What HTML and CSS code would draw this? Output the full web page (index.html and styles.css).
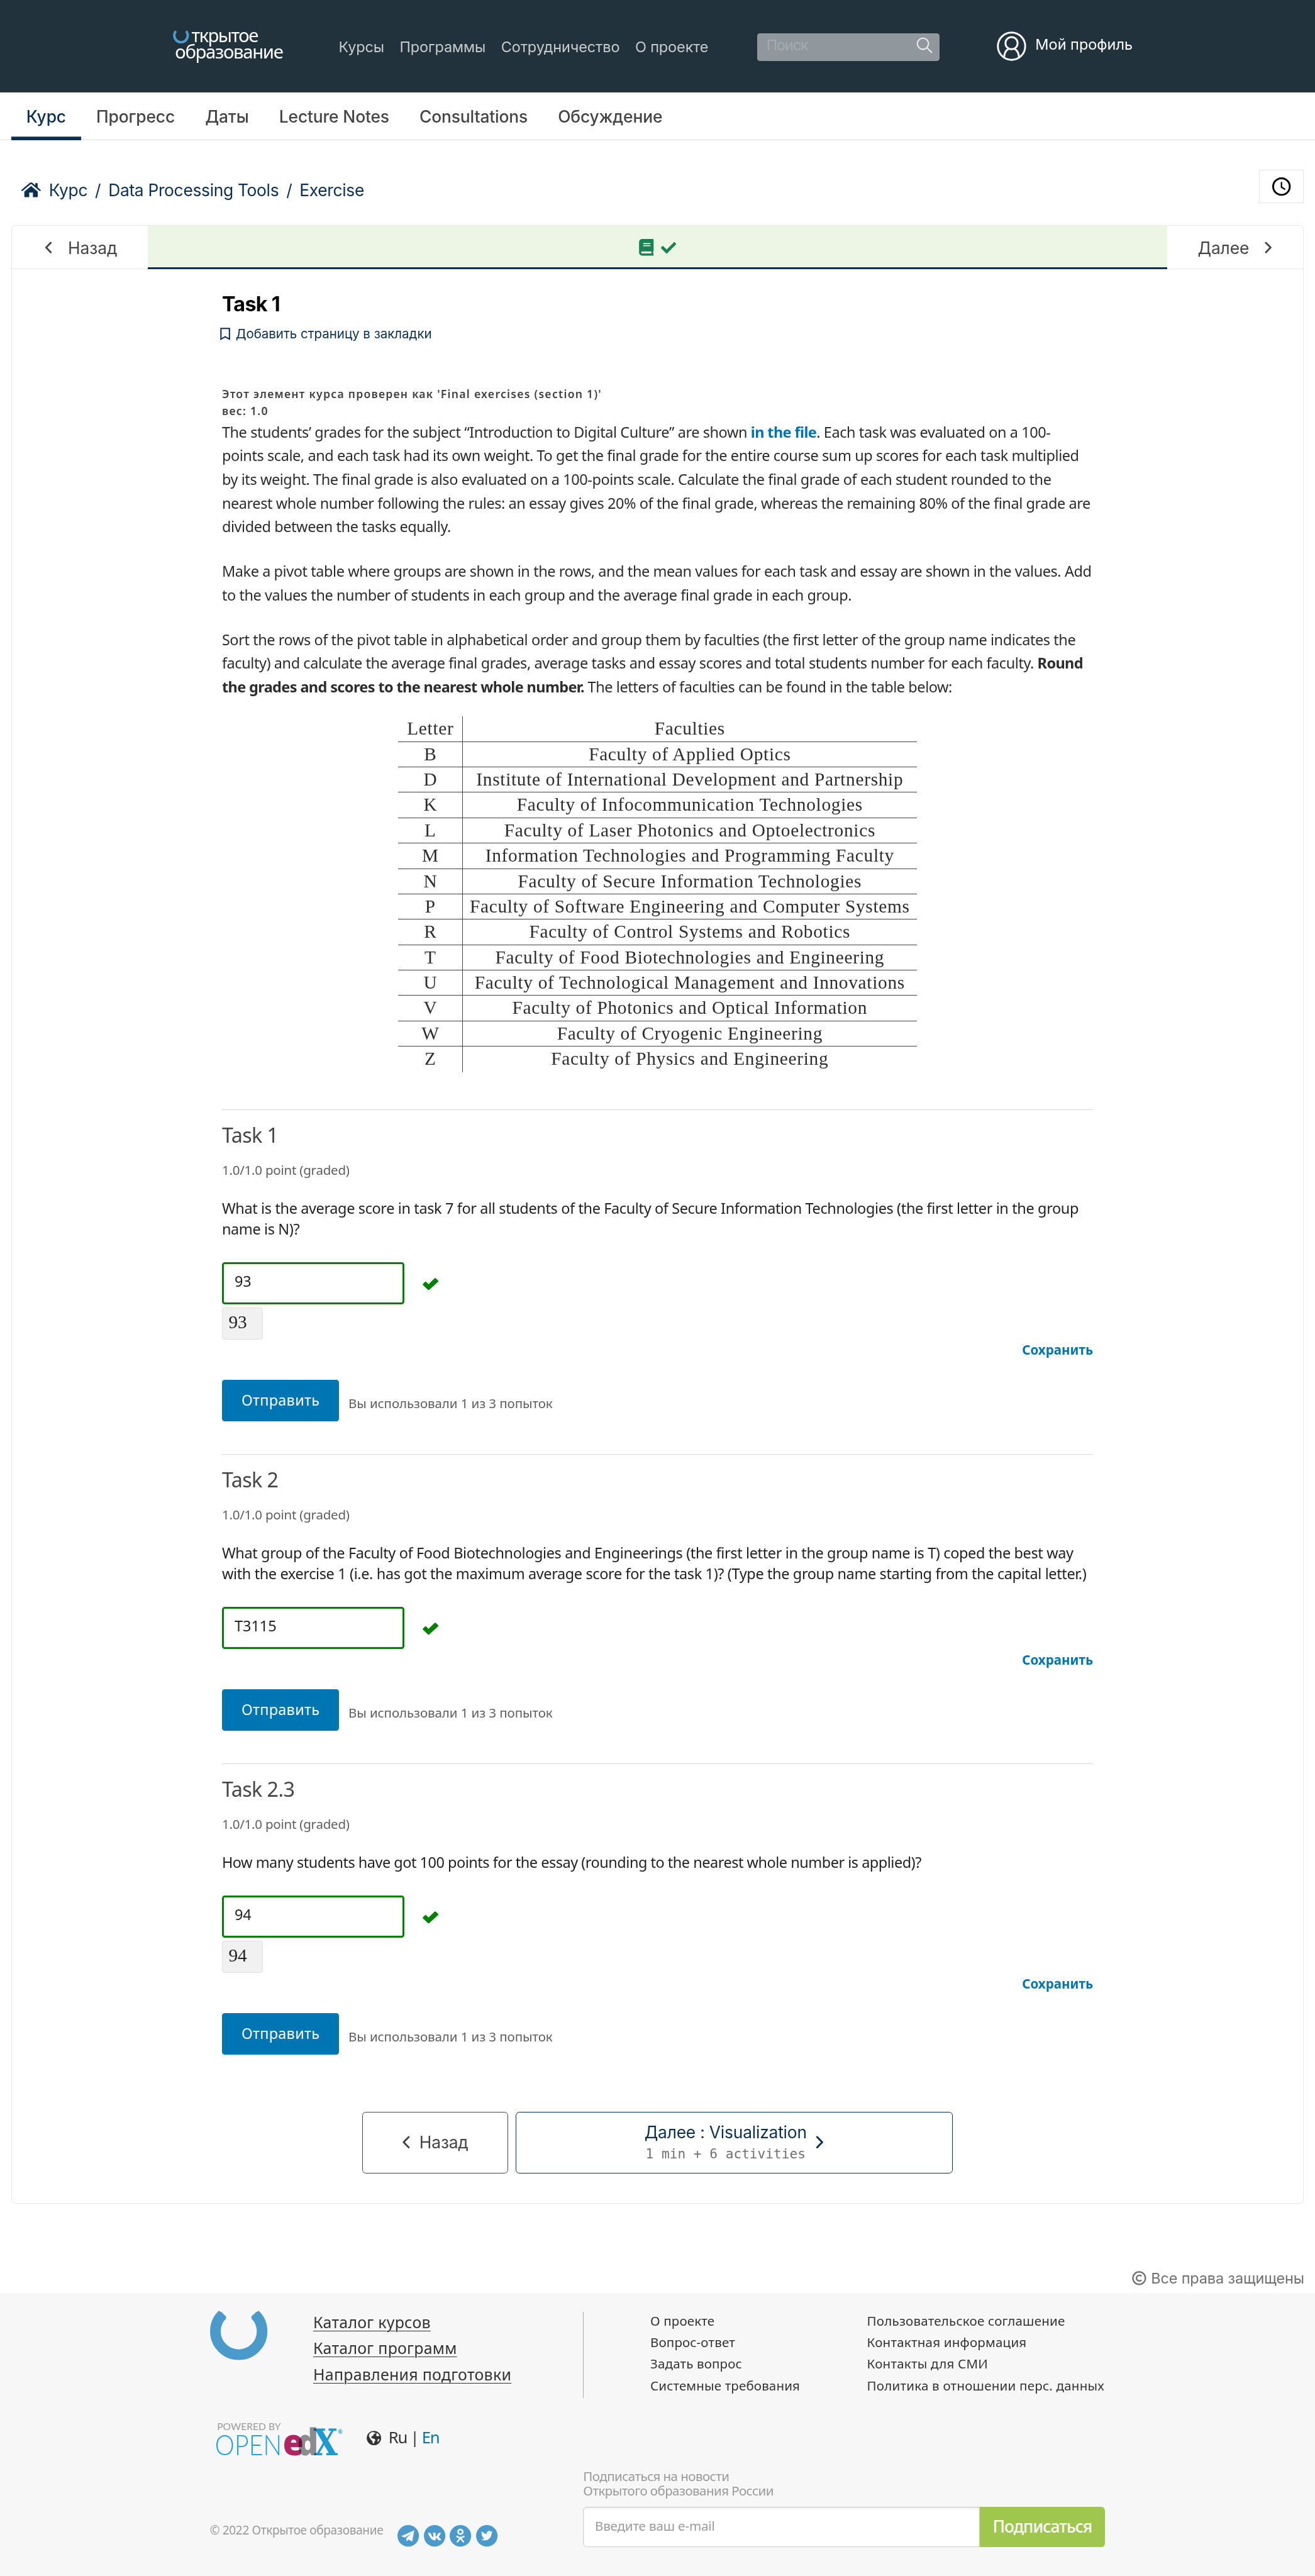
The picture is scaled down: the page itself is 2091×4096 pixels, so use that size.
FILE: index.html
```
<!DOCTYPE html>
<html lang="ru">
<head>
<meta charset="utf-8">
<title>Task 1 | Открытое образование</title>
<link rel="stylesheet" href="styles.css">
</head>
<body>
<svg class="defs" aria-hidden="true">
  <symbol id="check" viewBox="0 0 512 512"><path d="M173.898 439.404l-166.4-166.4c-9.997-9.997-9.997-26.206 0-36.204l36.203-36.204c9.997-9.998 26.207-9.998 36.204 0L192 312.69 432.095 72.596c9.997-9.997 26.207-9.997 36.204 0l36.203 36.204c9.997 9.997 9.997 26.206 0 36.204l-294.4 294.401c-9.998 9.997-26.207 9.997-36.204-.001z"/></symbol>
  <symbol id="heavy-check" viewBox="0 0 17 13.2"><path d="M.3 6.6L2.6 4.2q.6-.6 1.2 0L6.3 6.8 12.9.4q.6-.6 1.2 0l2.6 2.4q.5.6 0 1.2L7 12.8q-.6.6-1.2 0L.3 7.6q-.5-.5 0-1z"/></symbol>
  <symbol id="left" viewBox="0 0 8 13"><path d="M6.7 1.3L1.6 6.5l5.1 5.2" fill="none" stroke="currentColor" stroke-width="1.9" stroke-linecap="round" stroke-linejoin="round"/></symbol>
  <symbol id="right" viewBox="0 0 8 13"><path d="M1.3 1.3l5.1 5.2-5.1 5.2" fill="none" stroke="currentColor" stroke-width="1.9" stroke-linecap="round" stroke-linejoin="round"/></symbol>
</svg>

<header class="top">
  <a class="brand">
    <span class="brand-line"><svg class="brand-o" viewBox="0 0 17.5 14.7"><path d="M3.2 1A7.3 7.3 0 1 0 14.3 1" fill="none" stroke="#4a9bd0" stroke-width="2.7"/></svg>ткрытое</span>
    <span class="brand-line second">образование</span>
  </a>
  <nav class="menu"><a>Курсы</a><a>Программы</a><a>Сотрудничество</a><a>О проекте</a></nav>
  <div class="search"><span>Поиск</span><svg viewBox="0 0 18 18"><circle cx="7.2" cy="7.2" r="6" /><path d="M11.6 11.6l5.4 5.4"/></svg></div>
  <a class="profile"><svg viewBox="0 0 32 32"><circle cx="16" cy="16" r="14.8"/><circle cx="16" cy="12.7" r="6.6"/><path d="M7.9 28c.4-5.4 2.6-8 5-9.2M24.100 28c-.4-5.400-2.600-8-5-9.200"/></svg>Мой профиль</a>
</header>

<nav class="tabs"><a class="active">Курс</a><a>Прогресс</a><a>Даты</a><a>Lecture Notes</a><a>Consultations</a><a>Обсуждение</a></nav>

<div class="path">
  <div class="crumbs">
    <svg viewBox="0 0 21 16"><path d="M10.500 4L17.800 10v5.200q0 .8-.8.8h-4.500v-5H8.500v5H4q-.8 0-.8-.8V10z"/><path d="M.8 8.600L9.600 1.200q.9-.7 1.800 0L20.200 8.600" fill="none" stroke="currentColor" stroke-width="1.6" stroke-linecap="round"/><path d="M15 .9h2.600v5l-2.600-2.200z"/></svg>
    <a>Курс</a><i>/</i><a>Data Processing Tools</a><i>/</i><a>Exercise</a>
  </div>
  <button class="clock"><svg viewBox="0 0 20 20"><circle cx="10" cy="10" r="9" /><path d="M10 5v5.600l4 2.500"/></svg></button>
</div>

<main class="card">
  <div class="seq">
    <a class="seq-side"><svg><use href="#left"/></svg>Назад</a>
    <a class="seq-mid">
      <svg class="book" viewBox="0 0 448 512"><path d="M448 360V24c0-13.3-10.7-24-24-24H96C43 0 0 43 0 96v320c0 53 43 96 96 96h328c13.300 0 24-10.700 24-24v-16c0-7.500-3.500-14.300-8.900-18.700-4.200-15.400-4.200-59.300 0-74.700 5.400-4.300 8.900-11.100 8.900-18.600zM128 134c0-3.300 2.700-6 6-6h212c3.300 0 6 2.700 6 6v20c0 3.300-2.700 6-6 6H134c-3.300 0-6-2.700-6-6v-20zm0 64c0-3.300 2.700-6 6-6h212c3.300 0 6 2.700 6 6v20c0 3.300-2.700 6-6 6H134c-3.300 0-6-2.700-6-6v-20zm253.400 250H96c-17.700 0-32-14.300-32-32 0-17.600 14.400-32 32-32h285.400c-1.900 17.100-1.900 46.900 0 64z"/></svg>
      <svg class="done"><use href="#check"/></svg>
    </a>
    <a class="seq-side next">Далее<svg><use href="#right"/></svg></a>
  </div>

  <div class="content">
    <h1>Task 1</h1>
    <a class="bookmark"><svg viewBox="0 0 11 14"><path d="M.9.900h9.200v11.600L5.500 9.800.900 12.500z"/></svg>Добавить страницу в закладки</a>
    <p class="hint">Этот элемент курса проверен как 'Final exercises (section 1)'<br>вес: 1.0</p>
    <div class="prose">
      <p>The students’ grades for the subject “Introduction to Digital Culture” are shown <a>in the file</a>. Each task was evaluated on a 100-<br>points scale, and each task had its own weight. To get the final grade for the entire course sum up scores for each task multiplied<br>by its weight. The final grade is also evaluated on a 100-points scale. Calculate the final grade of each student rounded to the<br>nearest whole number following the rules: an essay gives 20% of the final grade, whereas the remaining 80% of the final grade are<br>divided between the tasks equally.</p>
      <p>Make a pivot table where groups are shown in the rows, and the mean values for each task and essay are shown in the values. Add<br>to the values the number of students in each group and the average final grade in each group.</p>
      <p>Sort the rows of the pivot table in alphabetical order and group them by faculties (the first letter of the group name indicates the<br>faculty) and calculate the average final grades, average tasks and essay scores and total students number for each faculty. <b>Round<br>the grades and scores to the nearest whole number.</b> The letters of faculties can be found in the table below:</p>
    </div>

    <div class="faculties">
      <div class="row"><span>Letter</span><span>Faculties</span></div>
      <div class="row"><span>B</span><span>Faculty of Applied Optics</span></div>
      <div class="row"><span>D</span><span>Institute of International Development and Partnership</span></div>
      <div class="row"><span>K</span><span>Faculty of Infocommunication Technologies</span></div>
      <div class="row"><span>L</span><span>Faculty of Laser Photonics and Optoelectronics</span></div>
      <div class="row"><span>M</span><span>Information Technologies and Programming Faculty</span></div>
      <div class="row"><span>N</span><span>Faculty of Secure Information Technologies</span></div>
      <div class="row"><span>P</span><span>Faculty of Software Engineering and Computer Systems</span></div>
      <div class="row"><span>R</span><span>Faculty of Control Systems and Robotics</span></div>
      <div class="row"><span>T</span><span>Faculty of Food Biotechnologies and Engineering</span></div>
      <div class="row"><span>U</span><span>Faculty of Technological Management and Innovations</span></div>
      <div class="row"><span>V</span><span>Faculty of Photonics and Optical Information</span></div>
      <div class="row"><span>W</span><span>Faculty of Cryogenic Engineering</span></div>
      <div class="row"><span>Z</span><span>Faculty of Physics and Engineering</span></div>
    </div>

    <section class="problem">
      <h3>Task 1</h3>
      <p class="points">1.0/1.0 point (graded)</p>
      <p class="question">What is the average score in task 7 for all students of the Faculty of Secure Information Technologies (the first letter in the group<br>name is N)?</p>
      <div class="answer"><input type="text" value="93"><svg><use href="#heavy-check"/></svg></div>
      <div class="preview">93</div>
      <a class="save">Сохранить</a>
      <div class="actions"><button class="submit">Отправить</button><span>Вы использовали 1 из 3 попыток</span></div>
    </section>

    <section class="problem">
      <h3>Task 2</h3>
      <p class="points">1.0/1.0 point (graded)</p>
      <p class="question">What group of the Faculty of Food Biotechnologies and Engineerings (the first letter in the group name is T) coped the best way<br>with the exercise 1 (i.e. has got the maximum average score for the task 1)? (Type the group name starting from the capital letter.)</p>
      <div class="answer"><input type="text" value="T3115"><svg><use href="#heavy-check"/></svg></div>
      <a class="save">Сохранить</a>
      <div class="actions"><button class="submit">Отправить</button><span>Вы использовали 1 из 3 попыток</span></div>
    </section>

    <section class="problem">
      <h3>Task 2.3</h3>
      <p class="points">1.0/1.0 point (graded)</p>
      <p class="question short">How many students have got 100 points for the essay (rounding to the nearest whole number is applied)?</p>
      <div class="answer"><input type="text" value="94"><svg><use href="#heavy-check"/></svg></div>
      <div class="preview">94</div>
      <a class="save">Сохранить</a>
      <div class="actions"><button class="submit">Отправить</button><span>Вы использовали 1 из 3 попыток</span></div>
    </section>

    <div class="unit-nav">
      <a class="prev"><svg><use href="#left"/></svg>Назад</a>
      <a class="forward"><span class="forward-text"><span>Далее : Visualization</span><small>1 min + 6 activities</small></span><svg><use href="#right"/></svg></a>
    </div>
  </div>
</main>

<p class="rights"><svg viewBox="0 0 16 16"><circle cx="8" cy="8" r="7"/><path d="M10.700 6A3.200 3.200 0 1 0 10.700 10" /></svg>Все права защищены</p>

<footer class="footer">
  <div class="left">
    <div class="about">
      <svg class="u-logo" viewBox="0 0 62 52"><path d="M13.500 3.500A25.300 25.300 0 1 0 48.500 3.500" fill="none" stroke="#4a9acc" stroke-width="11.500"/><path d="M8.500 3.500Q10 0 12 .6L17.500 6 16 9.500zM53.500 3.500Q52 0 50 .6L44.500 6 46 9.500z" fill="#4a9acc"/></svg>
      <div class="catalog"><a>Каталог курсов</a><a>Каталог программ</a><a>Направления подготовки</a></div>
    </div>
    <div class="platform">
      <svg class="openedx" viewBox="0 0 138 37">
        <text x="1.500" y="8.200" class="powered" textLength="69" lengthAdjust="spacingAndGlyphs">POWERED BY</text>
        <text x="-.8" y="35.500" class="open" textLength="72.500" lengthAdjust="spacingAndGlyphs">OPEN</text>
        <text x="72.800" y="35.700" class="ed e" textLength="22.500" lengthAdjust="spacingAndGlyphs">e</text>
        <text x="88.300" y="35.700" class="ed d" textLength="23" lengthAdjust="spacingAndGlyphs">d</text>
        <text x="106.200" y="35.700" class="x" textLength="26" lengthAdjust="spacingAndGlyphs">X</text>
        <text x="132.500" y="12" class="reg">®</text>
      </svg>
      <svg class="globe" viewBox="0 0 16 16"><circle cx="8" cy="8" r="7.900" fill="#333"/><path d="M3 3.500l2.300-1.700 2.200-.6.500 1 1.800-.5-.6 1.600-1.500.7-.7 1.500-1.500.8-.5 1.300 1.500.8 2.200.5.900 1.400-1 1.700-.9 2.300-1-.6-.5-2.400-1.600-1.500-1.500-2.300-.7-2zM11 2.300l2.200 1.500 1 2.200-1.600-.3-.9.700-1.200-1zM12 9.500l2-.6-.5 2.200-1.500 1.500z" fill="#f7f7f7"/></svg>
      <span class="lang">Ru | <a>En</a></span>
    </div>
    <div class="legal">
      <span>© 2022 Открытое образование</span>
      <svg viewBox="0 0 23 23"><circle cx="11.500" cy="11.500" r="11.500"/><path class="w" d="M3.800 12L18 5.600 15.800 17.600l-4-2.200-2 2.100-.4-3.500 5.500-5.100-7 4.400z"/></svg>
      <svg viewBox="0 0 23 23"><circle cx="11.500" cy="11.500" r="11.500"/><path class="w" transform="translate(4.100 5.700) scale(.0257 .0257)" d="M545 117.700c3.700-12.500 0-21.700-17.800-21.700h-58.900c-15 0-21.900 7.900-25.600 16.700 0 0-30 73.100-72.400 120.500-13.700 13.700-20 18.100-27.500 18.100-3.700 0-9.400-4.400-9.400-16.900V117.700c0-15-4.200-21.700-16.600-21.700h-92.600c-9.400 0-15 7-15 13.500 0 14.200 21.200 17.500 23.400 57.500v86.800c0 19-3.400 22.500-10.900 22.500-20 0-68.600-73.400-97.400-157.400-5.800-16.300-11.500-22.900-26.600-22.900H38.800c-16.800 0-20.200 7.900-20.200 16.700 0 15.600 20 93.100 93.100 195.500C160.400 378.100 229 416 291.400 416c37.500 0 42.100-8.400 42.100-22.900 0-66.800-3.400-73.100 15.400-73.100 8.700 0 23.700 4.400 58.700 38.100 40 40 46.600 57.900 69 57.900h58.900c16.800 0 25.300-8.400 20.400-25-11.200-34.900-86.900-106.700-90.300-111.500-8.700-11.200-6.200-16.200 0-26.200.1-.1 72-101.300 79.400-135.600z"/></svg>
      <svg viewBox="0 0 23 23"><circle cx="11.500" cy="11.500" r="11.500"/><g class="s"><circle cx="11.500" cy="7.300" r="2.500"/><path d="M7.800 12.200q3.700 2.400 7.400 0M11.500 14L8.300 17.800M11.500 14l3.200 3.800"/></g></svg>
      <svg viewBox="0 0 23 23"><circle cx="11.500" cy="11.500" r="11.500"/><path class="w" transform="translate(5.300 5.100) scale(.0245)" d="M459.370 151.716c.325 4.548.325 9.097.325 13.645 0 138.720-105.583 298.558-298.558 298.558-59.452 0-114.680-17.219-161.137-47.106 8.447.974 16.568 1.299 25.340 1.299 49.055 0 94.213-16.568 130.274-44.832-46.132-.975-84.792-31.188-98.112-72.772 6.498.974 12.995 1.624 19.818 1.624 9.421 0 18.843-1.300 27.614-3.573-48.081-9.747-84.143-51.980-84.143-102.985v-1.299c13.969 7.797 30.214 12.670 47.431 13.319-28.264-18.843-46.781-51.005-46.781-87.391 0-19.492 5.197-37.360 14.294-52.954 51.655 63.675 129.300 105.258 216.365 109.807-1.624-7.797-2.599-15.918-2.599-24.040 0-57.828 46.782-104.934 104.934-104.934 30.213 0 57.502 12.670 76.670 33.137 23.715-4.548 46.456-13.320 66.599-25.340-7.798 24.366-24.366 44.833-46.132 57.827 21.117-2.273 41.584-8.122 60.426-16.243-14.292 20.791-32.161 39.308-52.628 54.253z"/></svg>
    </div>
  </div>
  <div class="right">
    <div class="links">
      <div class="links-col first"><a>О проекте</a><a>Вопрос-ответ</a><a>Задать вопрос</a><a>Системные требования</a></div>
      <div class="links-col"><a>Пользовательское соглашение</a><a>Контактная информация</a><a>Контакты для СМИ</a><a>Политика в отношении перс. данных</a></div>
    </div>
    <p class="news">Подписаться на новости<br>Открытого образования России</p>
    <div class="subscribe"><input type="text" placeholder="Введите ваш e-mail"><button>Подписаться</button></div>
  </div>
</footer>
</body>
</html>
```
FILE: styles.css
```
/* 1rem = 10 design units of a 1425-unit wide layout */
html { font-size: 14.6737px; }
* { box-sizing: border-box; }
body { margin: 0; background: #fff; font-family: "Noto Sans", "Open Sans", sans-serif; font-size: 1.6rem; color: #333; white-space: nowrap; -webkit-font-smoothing: antialiased; }
h1, h3, p { margin: 0; }
i { font-style: normal; }
svg { display: block; flex: none; fill: currentColor; overflow: visible; }
button, input { font: inherit; margin: 0; border: 0; border-radius: 0; outline: 0; }
.defs { position: absolute; width: 0; height: 0; }

/* header */
.top { display: flex; align-items: flex-start; height: 10rem; padding-left: 18.72rem; background: #21323c; font-family: Inter, sans-serif; color: #fff; }
.brand { display: block; width: 18.08rem; padding-top: 2.55rem; font-family: "Noto Sans", sans-serif; font-size: 2rem; }
.brand-line { display: flex; line-height: 2.6rem; letter-spacing: -.053em; }
.brand-line.second { margin-top: -.85rem; padding-left: .25rem; letter-spacing: -.046em; }
.brand-o { width: 1.75rem; height: 1.47rem; margin: .72rem .28rem 0 0; }
.menu { display: flex; gap: 1.67rem; width: 45.16rem; margin-left: -.1rem; padding-top: 4.12rem; line-height: 2rem; letter-spacing: -.005em; color: #c7cacc; }
.search { display: flex; justify-content: space-between; width: 19.77rem; height: 3rem; margin: 3.6rem 0 0 .2rem; padding: .3rem .75rem 0 1rem; border-radius: .3rem; background: #90989e; color: #a5acb0; line-height: 2.04rem; }
.search span { letter-spacing: -.05em; }
.search svg { width: 1.8rem; height: 1.8rem; margin-top: .1rem; fill: none; stroke: #e9ebec; stroke-width: 1.4; }
.profile { display: flex; margin: 3.4rem 0 0 6.17rem; gap: 1rem; line-height: 2.84rem; }
.profile svg { width: 3.2rem; height: 3.2rem; fill: none; stroke: #fff; stroke-width: 2; }

/* course tabs */
.tabs { display: flex; height: 5.2rem; padding-left: 1.2rem; font: 500 1.8rem/5.28rem Inter, sans-serif; letter-spacing: -.006em; color: #454545; box-shadow: inset 0 -.1rem #e7e7e7; }
.tabs a { padding: 0 1.64rem; }
.tabs .active { color: #0a3055; box-shadow: inset 0 -.4rem #0a3055; }

/* breadcrumbs */
.path { display: flex; justify-content: space-between; height: 9.2rem; padding: 0 1.2rem; color: #0a3055; }
.crumbs { display: flex; height: 2.4rem; margin: 4.23rem 0 0 1.15rem; font: 400 1.8rem/2.4rem Inter, sans-serif; letter-spacing: -.0125em; }
.crumbs svg { width: 2.1rem; height: 1.6rem; margin: .35rem .85rem 0 0; }
.crumbs i { margin: 0 .81rem; }
.clock { display: grid; place-items: center; width: 4.86rem; height: 3.6rem; margin-top: 3.2rem; padding: 0; border: .1rem solid #e7e4e1; background: #fff; color: #000; }
.clock svg { width: 2rem; height: 2rem; fill: none; stroke: #000; stroke-width: 2; }
.clock path { stroke-width: 1.5; }

/* sequence card */
.card { height: 214.4rem; margin: 0 1.2rem; border: 1px solid #e7e7e7; border-radius: .4rem; }
.seq { display: flex; height: calc(4.8rem - 1px); font: 400 1.8rem/4.9rem Inter, sans-serif; letter-spacing: -.005em; color: #454545; }
.seq-side { display: flex; width: 14.75rem; padding-left: 3.6rem; gap: 1.7rem; border-bottom: 1px solid #e9e5e1; }
.seq-side svg { width: .8rem; height: 1.3rem; margin-top: 1.72rem; }
.seq-side.next { padding-left: 3.3rem; }
.seq-mid { display: flex; flex: 1; justify-content: center; gap: .75rem; border-bottom: 3px solid #0a3055; background: #edf6e4; color: #178253; }
.book { width: 1.6rem; height: 1.8rem; margin-top: 1.45rem; }
.done { width: 1.65rem; height: 1.65rem; margin-top: 1.55rem; }

.content { width: 94.4rem; margin: 0 auto; }
h1 { margin-top: 2.29rem; font: 700 2.2rem/3rem Inter, sans-serif; letter-spacing: -.022em; color: #000; }
.bookmark { display: flex; margin: .71rem 0 0 -.22rem; font: 400 1.4rem/2rem Inter, sans-serif; letter-spacing: -.002em; color: #0a3055; gap: .6rem; }
.bookmark svg { width: 1.1rem; height: 1.4rem; margin-top: .3rem; fill: none; stroke: #0a3055; stroke-width: 1.4; }
.hint { margin-top: 4.59rem; font-size: 1.2rem; font-weight: 600; line-height: 1.81rem; letter-spacing: .0713em; color: #414141; }
.prose { margin-top: .18rem; line-height: 2.56rem; letter-spacing: -.0178em; color: #2c2c2c; }
.prose p + p { margin-top: 2.28rem; }
.prose a { font-weight: 700; color: #0075b4; letter-spacing: -.025em; }
.prose b { letter-spacing: -.026em; }

.faculties { width: 56.16rem; margin: 1.89rem auto 0; font: 400 2rem/2.7rem "Liberation Serif", serif; letter-spacing: .024em; color: #2d2d2d; }
.row { display: flex; height: 2.753rem; text-align: center; border-bottom: 1px solid #444; }
.row:last-child { border-bottom: 0; }
.row span:first-child { width: 7rem; border-right: 1px solid #444; }
.row span:last-child { flex: 1; }

/* problems */
.problem { padding: 1.2rem 0 3.53rem; border-top: 1px solid #d9d9d9; color: #222; }
.faculties + .problem { margin-top: 4.02rem; }
h3 { font-size: 2.2rem; font-weight: 400; line-height: 3rem; letter-spacing: -.018em; color: #454545; }
.points { margin-top: 1.34rem; font-size: 1.4rem; line-height: 2rem; letter-spacing: -.0117em; color: #5e5e5e; }
.question { margin-top: 2.01rem; line-height: 2.25rem; letter-spacing: -.0158em; }
.question.short { letter-spacing: -.0205em; }
.answer { display: flex; align-items: center; gap: 2rem; margin-top: 2.48rem; }
.answer input { width: 19.76rem; height: 4.56rem; padding: 0 1.16rem .45rem; border: 3px solid #008100; border-radius: .3rem; background: #fff; color: #222; box-shadow: inset 0 0 .3rem #00000020; }
.answer svg { width: 1.72rem; height: 1.33rem; margin-top: .1rem; color: #008100; }
.preview { width: 4.42rem; height: 3.48rem; margin-top: .32rem; padding-left: .65rem; border: 1px solid #dfdfdf; border-radius: .3rem; background: #f1f1f1; font: 400 2rem/3.1rem "Liberation Serif", serif; }
.save { display: block; margin-top: .18rem; font-size: 1.4rem; font-weight: 700; line-height: 2rem; letter-spacing: .002em; text-align: right; color: #0075b4; }
.actions { display: flex; gap: 1rem; margin-top: 2.21rem; font-size: 1.4rem; letter-spacing: -.005em; color: #5e5e5e; }
.actions span { margin-top: .85rem; line-height: 3.4rem; }
.submit { width: 12.7rem; height: 4.47rem; padding: 0; border-radius: .3rem; background: #0075b4; color: #fff; font-size: 1.6rem; font-weight: 400; line-height: 4.47rem; letter-spacing: .012em; }

/* previous / next unit */
.unit-nav { display: flex; justify-content: center; gap: .8rem; margin-top: 2.65rem; font: 400 1.8rem/2.4rem Inter, sans-serif; letter-spacing: -.008em; }
.unit-nav a { display: flex; align-items: center; justify-content: center; height: 6.7rem; border: 1px solid; border-radius: .4rem; }
.unit-nav svg { width: .9rem; height: 1.4rem; }
.unit-nav .prev { width: 15.8rem; gap: 1rem; color: #454545; }
.unit-nav .forward { width: 47.4rem; gap: .95rem; color: #0a3055; }
.forward-text { display: grid; text-align: center; padding-top: .1rem; }
.forward-text small { font: 400 1.44rem/2.3rem "DejaVu Sans Mono", monospace; letter-spacing: 0; color: #707070; }

.rights { display: flex; justify-content: flex-end; gap: .5rem; height: 2.78rem; margin: 6.9rem 1.17rem 0; font: 400 1.6rem/2.4rem Inter, sans-serif; letter-spacing: -.006em; color: #707070; }
.rights svg { width: 1.55rem; height: 1.55rem; margin-top: .4rem; fill: none; stroke: #707070; stroke-width: 1.600; }

/* footer */
.footer { display: flex; height: 30.75rem; padding: 0 22.76rem 0 22.74rem; background: #f7f7f7; }
.left { width: 40.46rem; }
.about { display: flex; height: 14rem; padding-top: 1.79rem; }
.u-logo { width: 6.22rem; height: 5.2rem; margin: .18rem 4.98rem 0 0; }
.catalog { display: grid; justify-items: start; align-content: start; font-size: 1.7rem; line-height: 2.8rem; letter-spacing: .010em; text-decoration: underline; text-underline-offset: .15em; text-decoration-thickness: .1rem; }
.platform { display: flex; height: 11.15rem; }
.openedx { width: 13.8rem; height: 3.7rem; margin: .02rem 2.54rem 0 .65rem; }
.powered { font: 400 10.5px Lato, sans-serif; fill: #999; }
.open { font: 300 31px Lato, sans-serif; fill: #1d9fda; }
.ed { font: 800 40px "Open Sans", sans-serif; mix-blend-mode: multiply; }
.e { fill: #b72667; }
.d { fill: #8e9194; }
.x { font: 700 39px "DejaVu Serif", serif; fill: #1d9fda; mix-blend-mode: multiply; }
.reg { font: 700 6px Lato, sans-serif; fill: #1d9fda; }
.globe { width: 1.58rem; height: 1.58rem; margin: .93rem .8rem 0 0; }
.lang { font-size: 1.75rem; line-height: 2.4rem; margin-top: .45rem; letter-spacing: -.05em; }
.lang a { color: #0075b4; }
.legal { display: flex; gap: .5rem; font-size: 1.3rem; letter-spacing: -.0187em; line-height: 2rem; color: #999; }
.legal span { width: 19.8rem; margin: -.43rem .05rem 0 0; }
.legal svg { width: 2.33rem; height: 2.33rem; fill: #4a9acc; }
.legal .w { fill: #f7f7f7; }
.legal .s { fill: none; stroke: #f7f7f7; stroke-width: 1.700; stroke-linecap: round; }

.right { flex: 1; padding-top: 2.01rem; }
.links { display: flex; height: 9.35rem; padding-left: 7.2rem; border-left: 1px solid #aaa; }
.links-col { display: grid; align-content: start; margin-top: -.17rem; font-size: 1.4rem; line-height: 2.33rem; letter-spacing: .0105em; }
.links-col.first { width: 23.48rem; letter-spacing: .0067em; }
.news { margin-top: 7.75rem; font-size: 1.4rem; line-height: 1.55rem; letter-spacing: -.027em; color: #999; }
.subscribe { display: flex; margin-top: .95rem; }
.subscribe input { width: 42.95rem; height: 4.4rem; padding: 0 1.2rem .3rem; border: 1px solid #ccc; border-radius: .4rem 0 0 .4rem; background: #fff; font-size: 1.4rem; letter-spacing: -.0075em; box-shadow: inset 0 .1rem .2rem #00000018; }
.subscribe input::placeholder { color: #999; opacity: 1; }
.subscribe button { flex: 1; height: 4.4rem; padding: 0 0 .2rem; border-radius: 0 .4rem .4rem 0; background: #9fc64d; color: #fff; font-size: 1.8rem; font-weight: 500; letter-spacing: -.037em; }
```
